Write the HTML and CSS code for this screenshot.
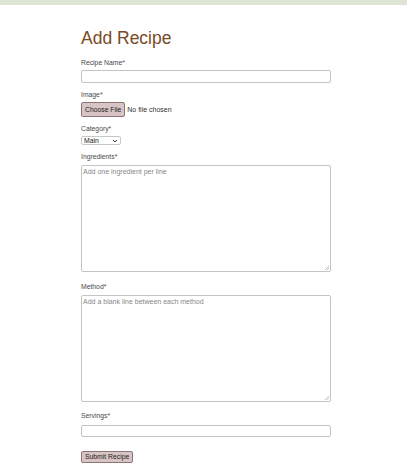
FILE: index.html
```html
<!DOCTYPE html>
<html>
<head>
<meta charset="utf-8">
<link rel="stylesheet" href="styles.css">
</head>
<body>
<div class="topbar"></div>
<main class="page">
  <h1 class="title">Add Recipe</h1>
  <form class="form">
    <label class="label tight">Recipe Name*</label>
    <div class="input first"></div>
    <label class="label">Image*</label>
    <div class="file"><span class="btn">Choose File</span><span class="nofile">No file chosen</span></div>
    <label class="label tight">Category*</label>
    <div class="select"><span>Main</span><svg width="6" height="4" viewBox="0 0 6 4"><path d="M1 1 L3 3 L5 1" fill="none" stroke="#333" stroke-width="1"/></svg></div>
    <label class="label near">Ingredients*</label>
    <div class="textarea ing"><span class="ph">Add one ingredient per line</span><svg class="grip" width="4" height="4" viewBox="0 0 4 4"><path d="M0 4 L4 0 M2 4 L4 2" stroke="#999" stroke-width="0.6"/></svg></div>
    <label class="label near">Method*</label>
    <div class="textarea"><span class="ph">Add a blank line between each method</span><svg class="grip" width="4" height="4" viewBox="0 0 4 4"><path d="M0 4 L4 0 M2 4 L4 2" stroke="#999" stroke-width="0.6"/></svg></div>
    <label class="label">Servings*</label>
    <div class="input last"></div>
    <div class="submitrow"><span class="btn submit">Submit Recipe</span></div>
  </form>
</main>
</body>
</html>
```
FILE: styles.css
```css
html, body { margin: 0; padding: 0; background: #fff; }
body { font-family: "Liberation Sans", Arial, sans-serif; width: 407px; height: 476px; overflow: hidden; }
.topbar { height: 5px; background: #dfe5d5; }
.page { margin-left: 81px; width: 250px; }
.title { margin: 0; padding-top: 21px; font-size: 17.5px; font-weight: normal; color: #7a4a25; line-height: 24px; }
.form { display: flex; flex-direction: column; align-items: flex-start; padding-top: 9px; }
.label { display: block; font-size: 6.8px; color: #4a4a4a; line-height: 8px; margin-bottom: 5px; }
.label.tight { margin-bottom: 3px; }
.label.near { margin-bottom: 4px; }
.input { width: 248px; height: 11px; border: 1px solid #c4c4c4; border-radius: 2px; margin-bottom: 8px; box-sizing: content-box; }
.input.last { height: 10px; margin-bottom: 8px; }
.file { display: flex; align-items: center; margin-top: -2px; margin-bottom: 8px; }
.btn { display: inline-block; font-size: 6.8px; color: #222; background: #d8c4c4; border: 1px solid #8b7575; border-radius: 2px; padding: 2px 3px; line-height: 9px; }
.nofile { font-size: 7px; color: #333; margin-left: 2px; }
.select { width: 40px; height: 9px; border: 1px solid #c8c8c8; border-radius: 2px; display: flex; align-items: center; justify-content: space-between; padding: 0 2px; box-sizing: border-box; font-size: 6.8px; color: #222; margin-bottom: 8px; }
.textarea { position: relative; width: 248px; height: 105px; border: 1px solid #c4c4c4; border-radius: 2px; margin-bottom: 10px; }
.textarea.ing { margin-bottom: 11px; }
.ph { display: block; font-size: 7px; color: #888; padding: 2px 1px; }
.grip { position: absolute; right: 1px; bottom: 1px; }
.submit { padding: 1px 3px; line-height: 8px; }
```
